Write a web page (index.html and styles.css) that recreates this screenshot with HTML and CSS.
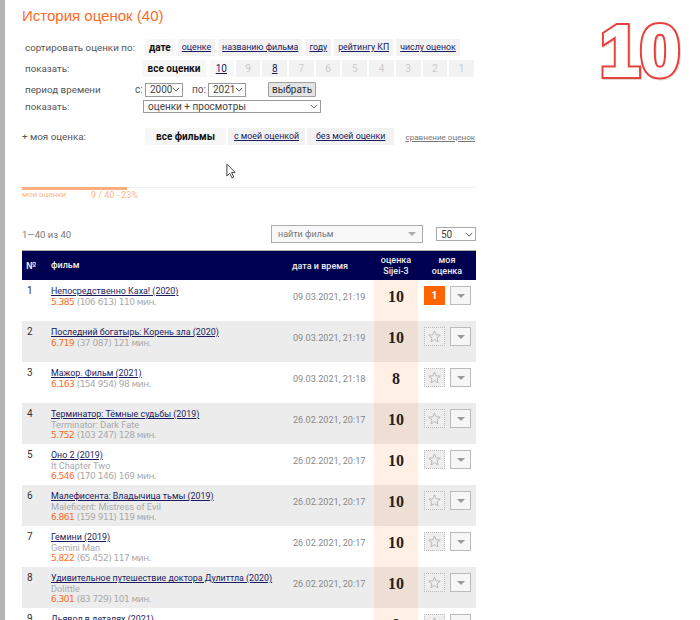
FILE: index.html
```html
<!DOCTYPE html>
<html lang="ru">
<head>
    <meta charset="UTF-8">
    <title>История оценок</title>
    <link rel="stylesheet" href="styles.css">
</head>
<body>
    <svg class="icon-defs" width="0" height="0">
        <symbol id="star" viewBox="0 0 14 14"><path d="M7 1l1.700 4.200 4.500.3-3.500 2.900 1.100 4.400L7 10.400l-3.800 2.400 1.100-4.400L.8 5.500l4.500-.3z"/></symbol>
    </svg>

    <div id="page">
        <h1 class="title">История оценок (40)</h1>

        <div class="filters">
            <div class="filter-row row-sort">
                <span class="filter-label">сортировать оценки по:</span>
                <div class="tabs">
                    <span class="tab active">дате</span>
                    <a class="tab" href="#">оценке</a>
                    <a class="tab" href="#">названию фильма</a>
                    <a class="tab" href="#">году</a>
                    <a class="tab" href="#">рейтингу КП</a>
                    <a class="tab" href="#">числу оценок</a>
                </div>
            </div>
            <div class="filter-row row-show">
                <span class="filter-label">показать:</span>
                <div class="tabs">
                    <span class="tab active wide">все оценки</span>
                    <a class="tab num plain" href="#">10</a>
                    <span class="tab num off">9</span>
                    <a class="tab num" href="#">8</a>
                    <span class="tab num off">7</span>
                    <span class="tab num off">6</span>
                    <span class="tab num off">5</span>
                    <span class="tab num off">4</span>
                    <span class="tab num off">3</span>
                    <span class="tab num off">2</span>
                    <span class="tab num off">1</span>
                </div>
            </div>
            <div class="filter-row row-period">
                <span class="filter-label short">период времени</span>
                <span class="from">с:</span>
                <span class="select year">2000<svg class="chev" viewBox="0 0 10 6"><path d="M1 1l4 4 4-4"/></svg></span>
                <span class="to">по:</span>
                <span class="select year">2021<svg class="chev" viewBox="0 0 10 6"><path d="M1 1l4 4 4-4"/></svg></span>
                <button class="btn-choose">выбрать</button>
            </div>
            <div class="filter-row row-kind">
                <span class="filter-label">показать:</span>
                <span class="select kind">оценки + просмотры<svg class="chev" viewBox="0 0 10 6"><path d="M1 1l4 4 4-4"/></svg></span>
            </div>
            <div class="filter-row row-mine">
                <span class="filter-label mine">+ моя оценка:</span>
                <div class="tabs">
                    <span class="tab active big">все фильмы</span>
                    <a class="tab" href="#">с моей оценкой</a>
                    <a class="tab last" href="#">без моей оценки</a>
                </div>
                <a class="compare" href="#">сравнение оценок</a>
            </div>
        </div>

        <div class="progress">
            <div class="progress-bar"></div>
            <div class="progress-text"><span class="progress-name">мои оценки</span><span>9 / 40 - 23%</span></div>
        </div>

        <div class="list-top">
            <span class="count">1—40 из 40</span>
            <span class="find">найти фильм<i class="arrow"></i></span>
            <span class="select per-page">50<svg class="chev" viewBox="0 0 10 6"><path d="M1 1l4 4 4-4"/></svg></span>
        </div>

        <div class="table-head">
            <div class="c-num">№</div>
            <div class="c-film">фильм</div>
            <div class="c-date">дата и время</div>
            <div class="c-score">оценка<br>Sijei-3</div>
            <div class="c-mine">моя<br>оценка</div>
        </div>

        <div class="rows">
            <div class="row">
                <div class="c-num">1</div>
                <div class="c-film"><a href="#">Непосредственно Каха! (2020)</a><p class="meta"><b>5.385</b> (106 613) 110 мин.</p></div>
                <div class="c-date">09.03.2021, 21:19</div>
                <div class="c-score">10</div>
                <div class="c-mine"><span class="my-vote">1</span><span class="drop"><i class="arrow"></i></span></div>
            </div>
            <div class="row">
                <div class="c-num">2</div>
                <div class="c-film"><a href="#">Последний богатырь: Корень зла (2020)</a><p class="meta"><b>6.719</b> (37 087) 121 мин.</p></div>
                <div class="c-date">09.03.2021, 21:19</div>
                <div class="c-score">10</div>
                <div class="c-mine"><span class="star"><svg><use href="#star"/></svg></span><span class="drop"><i class="arrow"></i></span></div>
            </div>
            <div class="row">
                <div class="c-num">3</div>
                <div class="c-film"><a href="#">Мажор. Фильм (2021)</a><p class="meta"><b>6.163</b> (154 954) 98 мин.</p></div>
                <div class="c-date">09.03.2021, 21:18</div>
                <div class="c-score">8</div>
                <div class="c-mine"><span class="star"><svg><use href="#star"/></svg></span><span class="drop"><i class="arrow"></i></span></div>
            </div>
            <div class="row">
                <div class="c-num">4</div>
                <div class="c-film"><a href="#">Терминатор: Тёмные судьбы (2019)</a><p>Terminator: Dark Fate</p><p class="meta"><b>5.752</b> (103 247) 128 мин.</p></div>
                <div class="c-date">26.02.2021, 20:17</div>
                <div class="c-score">10</div>
                <div class="c-mine"><span class="star"><svg><use href="#star"/></svg></span><span class="drop"><i class="arrow"></i></span></div>
            </div>
            <div class="row">
                <div class="c-num">5</div>
                <div class="c-film"><a href="#">Оно 2 (2019)</a><p>It Chapter Two</p><p class="meta"><b>6.546</b> (170 146) 169 мин.</p></div>
                <div class="c-date">26.02.2021, 20:17</div>
                <div class="c-score">10</div>
                <div class="c-mine"><span class="star"><svg><use href="#star"/></svg></span><span class="drop"><i class="arrow"></i></span></div>
            </div>
            <div class="row">
                <div class="c-num">6</div>
                <div class="c-film"><a href="#">Малефисента: Владычица тьмы (2019)</a><p>Maleficent: Mistress of Evil</p><p class="meta"><b>6.861</b> (159 911) 119 мин.</p></div>
                <div class="c-date">26.02.2021, 20:17</div>
                <div class="c-score">10</div>
                <div class="c-mine"><span class="star"><svg><use href="#star"/></svg></span><span class="drop"><i class="arrow"></i></span></div>
            </div>
            <div class="row">
                <div class="c-num">7</div>
                <div class="c-film"><a href="#">Гемини (2019)</a><p>Gemini Man</p><p class="meta"><b>5.822</b> (65 452) 117 мин.</p></div>
                <div class="c-date">26.02.2021, 20:17</div>
                <div class="c-score">10</div>
                <div class="c-mine"><span class="star"><svg><use href="#star"/></svg></span><span class="drop"><i class="arrow"></i></span></div>
            </div>
            <div class="row">
                <div class="c-num">8</div>
                <div class="c-film"><a href="#">Удивительное путешествие доктора Дулиттла (2020)</a><p>Dolittle</p><p class="meta"><b>6.301</b> (83 729) 101 мин.</p></div>
                <div class="c-date">26.02.2021, 20:17</div>
                <div class="c-score">10</div>
                <div class="c-mine"><span class="star"><svg><use href="#star"/></svg></span><span class="drop"><i class="arrow"></i></span></div>
            </div>
            <div class="row">
                <div class="c-num">9</div>
                <div class="c-film"><a href="#">Дьявол в деталях (2021)</a></div>
                <div class="c-date"></div>
                <div class="c-score">8</div>
                <div class="c-mine"><span class="star"><svg><use href="#star"/></svg></span><span class="drop"><i class="arrow"></i></span></div>
            </div>
        </div>
    </div>

    <div class="big-ten" data-text="10">10</div>

    <svg class="cursor" viewBox="0 0 12 18"><path d="M1 1v13l3-3 2.500 5 2-1-2.500-5h4z"/></svg>
</body>
</html>
```

FILE: styles.css
```css
html, body {
    margin: 0;
    height: 620px;
    overflow: hidden;
    background: #fff;
}

body {
    font-family: Roboto, Arial, sans-serif;
    font-size: 10px;
    color: #333;
    border-left: 5px solid #b4b4b4;
}

.icon-defs {
    position: absolute;
}

#page {
    width: 454px;
    margin-left: 17px;
}

a {
    color: #1a1a5e;
}

.title {
    margin: 0;
    padding-top: 7px;
    height: 39px;
    box-sizing: border-box;
    font-family: "Liberation Sans", Arial, sans-serif;
    font-size: 15px;
    line-height: 18px;
    font-weight: normal;
    color: #ff6a1f;
}

/* filters */
.filters {
    padding-left: 3px;
    height: 148px;
    box-sizing: border-box;
}

.filter-row {
    display: flex;
    align-items: center;
}

.filter-label {
    width: 120px;
    flex: none;
    font-size: 9.8px;
    color: #555;
}

.filter-label.short {
    width: 110px;
}

.tabs {
    display: flex;
    gap: 3px;
}

.tab {
    padding: 0 4px;
    height: 17px;
    font-size: 8.8px;
    line-height: 17px;
    background: #f2f2f2;
    white-space: nowrap;
}

.tab.active {
    font-size: 10px;
    font-weight: bold;
    color: #111;
    background: #f7f7f7;
}

.row-show {
    margin-top: 4px;
}

.row-show .tabs {
    gap: 2px;
    margin-left: -3px;
}

.tab.wide {
    width: 64px;
    box-sizing: border-box;
    padding: 0;
    text-align: center;
    margin-right: 1px;
}

.tab.num {
    width: 24.7px;
    padding: 0;
    font-size: 10px;
    text-align: center;
}

.tab.plain {
    background: #f9f9f9;
}

.tab.off {
    color: #ccc;
}

.row-period {
    margin-top: 5px;
    height: 15px;
}

.from {
    width: 10px;
    color: #555;
}

.to {
    margin-left: 9px;
    width: 16px;
    color: #555;
}

.select {
    display: flex;
    align-items: center;
    justify-content: space-between;
    box-sizing: border-box;
    height: 14px;
    padding: 0 2px 0 4px;
    border: 1px solid #9a9a9a;
    background: #fff;
    color: #444;
}

.select.year {
    width: 38px;
    font-size: 10px;
}

.select.kind {
    width: 178px;
    height: 13px;
    margin-left: -2px;
}

.chev {
    flex: none;
    width: 8px;
    height: 5px;
    fill: none;
    stroke: #555;
    stroke-width: 1.2;
}

.btn-choose {
    margin-left: 22px;
    box-sizing: border-box;
    width: 48px;
    height: 15px;
    padding: 0;
    font: inherit;
    color: #333;
    background: #e4e4e4;
    border: 1px solid #a0a0a0;
    border-radius: 1px;
}

.row-kind {
    margin-top: 3px;
    height: 13px;
}

.row-mine {
    margin-top: 15px;
}

.filter-label.mine {
    margin-left: -3px;
    width: 123px;
}

.row-mine .tabs {
    gap: 2px;
}

.row-mine .tab {
    padding: 0 6px;
}

.row-mine .tab.big {
    width: 81px;
    box-sizing: border-box;
    padding: 0;
    text-align: center;
}

.row-mine .tab.last {
    padding: 0 9px;
}

.compare {
    margin-left: 11px;
    font-size: 8.1px;
    color: #777;
    white-space: nowrap;
}

/* progress */
.progress {
    height: 37px;
    border-top: 1px solid #eee;
}

.progress-bar {
    width: 105px;
    height: 3px;
    margin-top: -1px;
    background: #ffad7a;
}

.progress-text {
    display: flex;
    font-size: 9px;
    color: #ffb48a;
    line-height: 10px;
}

.progress-name {
    width: 69px;
    font-size: 8px;
}

/* list top */
.list-top {
    display: flex;
    align-items: center;
    height: 18px;
    color: #777;
}

.count {
    width: 249px;
    font-size: 9.5px;
}

.find {
    display: flex;
    align-items: center;
    justify-content: space-between;
    box-sizing: border-box;
    width: 152px;
    height: 18px;
    padding: 0 6px;
    font-size: 9px;
    border: 1px solid #aaa;
    background: #f8f8f8;
    color: #777;
}

.find .arrow {
    border-top-color: #aaa;
}

.select.per-page {
    width: 40px;
    margin-left: 13px;
    height: 14px;
    border-color: #aaa;
}

/* table */
.table-head,
.row {
    display: grid;
    grid-template-columns: 29px 241px 82px 44px 58px;
}

.table-head {
    margin-top: 7px;
    height: 30px;
    background: #000050;
    color: #eee;
    font-size: 9px;
    font-weight: 500;
    line-height: 11px;
    border-top: 1px solid #aaa;
    box-sizing: border-box;
    align-items: center;
}

.table-head .c-num {
    padding: 0 0 0 4px;
    font-size: 10px;
}

.table-head .c-film {
    padding: 0;
    font-size: 9px;
}

.table-head .c-score,
.table-head .c-mine {
    display: block;
    text-align: center;
    background: none;
    padding: 0;
    font: inherit;
    color: inherit;
}

.table-head .c-date {
    padding: 0;
    font-size: 9px;
    color: #eee;
}

.row {
    height: 41px;
}

.row:nth-child(even) {
    background: #ececec;
}

.c-num {
    padding: 5px 0 0 5px;
}

.c-film {
    padding-top: 6px;
    line-height: 10.7px;
    white-space: nowrap;
}

.c-film a {
    font-size: 8.9px;
    color: #1a1a5e;
}

.c-film p {
    margin: 0;
    font-size: 9.2px;
    color: #aaa;
}

.c-film p.meta {
    font-family: "DejaVu Sans", sans-serif;
    font-size: 9px;
    letter-spacing: -0.5px;
}

.c-film b {
    color: #ff6a1f;
    font-weight: normal;
}

.c-date {
    color: #888;
    padding: 11px 0 0 1px;
    font-size: 9.1px;
    line-height: 12px;
    white-space: nowrap;
}

.c-score {
    background: rgba(255, 120, 40, 0.12);
    text-align: center;
    padding-top: 8px;
    line-height: 18px;
    font-family: "Liberation Serif", serif;
    font-weight: bold;
    font-size: 16px;
    color: #222;
}

.c-mine {
    display: flex;
    gap: 5px;
    padding: 6px 0 0 6px;
}

.my-vote,
.star,
.drop {
    display: flex;
    align-items: center;
    justify-content: center;
    box-sizing: border-box;
    width: 21px;
    height: 19px;
}

.my-vote {
    background: #ff6400;
    color: #fff;
    font-weight: bold;
    font-size: 11px;
}

.star {
    border: 1px dotted #bbb;
    background: #eee;
}

.star svg {
    width: 13px;
    height: 13px;
    fill: none;
    stroke: #b5b5b5;
    stroke-width: 1;
}

.drop {
    border: 1px solid #bbb;
    background: #f6f6f6;
}

.arrow {
    width: 0;
    height: 0;
    border-left: 4px solid transparent;
    border-right: 4px solid transparent;
    border-top: 4px solid #999;
}

/* overlays */
.big-ten {
    position: absolute;
    left: 600px;
    top: 9px;
    font-family: "Liberation Sans", Arial, sans-serif;
    font-weight: bold;
    font-size: 72px;
    line-height: 84px;
    color: #e8403c;
    -webkit-text-stroke: 6px #e8403c;
    filter: drop-shadow(1px 1px 0 rgba(0, 0, 0, 0.15));
}

.big-ten::after {
    content: attr(data-text);
    position: absolute;
    left: 0;
    top: 0;
    color: #fff;
    -webkit-text-stroke: 2px #fff;
}

.cursor {
    position: absolute;
    left: 226px;
    top: 163px;
    width: 11px;
    height: 17px;
    fill: #fff;
    stroke: #333;
    stroke-width: 1;
}
```
